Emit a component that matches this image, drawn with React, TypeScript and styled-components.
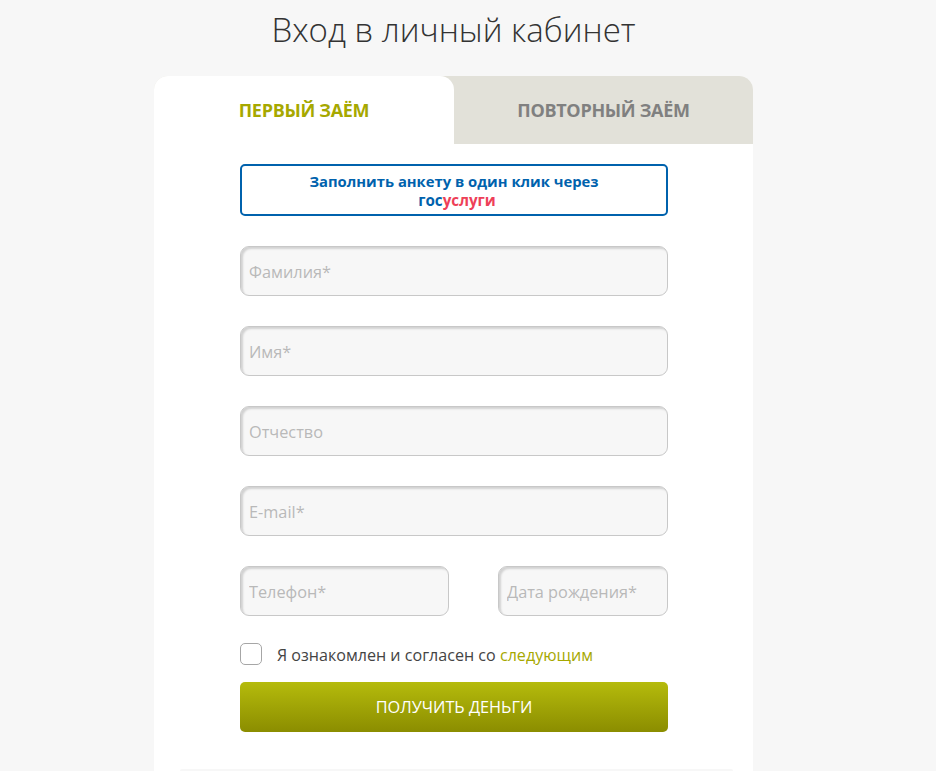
import React from "react";
import styled, { createGlobalStyle } from "styled-components";

const GlobalStyle = createGlobalStyle`
  html, body {
    margin: 0;
    height: 771px;
    overflow: hidden;
    background: #f7f7f7;
    font-family: "Open Sans", "Liberation Sans", sans-serif;
  }
  * {
    box-sizing: border-box;
  }
`;

const App = () => {
  return (
    <Page>
      <GlobalStyle />
      <Title>Вход в личный кабинет</Title>
      <Card>
        <Tabs>
          <Tab $active>ПЕРВЫЙ ЗАЁМ</Tab>
          <Tab>ПОВТОРНЫЙ ЗАЁМ</Tab>
        </Tabs>
        <Form>
          <GosButton type="button">
            Заполнить анкету в один клик через
            <GosLogo>
              гос<GosRed>услуги</GosRed>
            </GosLogo>
          </GosButton>
          <Field placeholder="Фамилия*" />
          <Field placeholder="Имя*" />
          <Field placeholder="Отчество" />
          <Field placeholder="E-mail*" />
          <Row>
            <Field $width={209} placeholder="Телефон*" />
            <Field $width={170} placeholder="Дата рождения*" />
          </Row>
          <Agree>
            <CheckBox />
            <AgreeText>
              Я ознакомлен и согласен со <AgreeLink>следующим</AgreeLink>
            </AgreeText>
          </Agree>
          <Submit type="button">ПОЛУЧИТЬ ДЕНЬГИ</Submit>
        </Form>
        <Divider />
      </Card>
    </Page>
  );
};

export default App;

const Page = styled.div`
  width: 936px;
  padding-left: 154px;
`;

const Title = styled.h1`
  width: 599px;
  height: 76px;
  margin: 0;
  padding-top: 6px;
  font-size: 33px;
  line-height: 48px;
  font-weight: 300;
  color: #333;
  text-align: center;
`;

const Card = styled.div`
  width: 599px;
  background: #fff;
  border-radius: 14px 14px 0 0;
`;

const Tabs = styled.div`
  display: flex;
  height: 68px;
  background: #e2e1d9;
  border-radius: 14px 14px 0 0;
`;

const Tab = styled.div<{ $active?: boolean }>`
  display: flex;
  align-items: center;
  justify-content: center;
  width: ${(p) => (p.$active ? "300px" : "299px")};
  font-size: 18px;
  font-weight: 700;
  letter-spacing: -0.3px;
  color: ${(p) => (p.$active ? "#a6a800" : "#808080")};
  background: ${(p) => (p.$active ? "#fff" : "transparent")};
  border-radius: 14px 14px 0 0;
`;

const Form = styled.div`
  display: flex;
  flex-direction: column;
  width: 428px;
  margin-left: 86px;
  padding-top: 20px;
`;

const GosButton = styled.button`
  display: block;
  width: 428px;
  height: 52px;
  margin-bottom: 30px;
  padding: 1px 0 0;
  font-family: inherit;
  font-size: 14.8px;
  line-height: 18px;
  font-weight: 700;
  color: #0062ad;
  background: #fff;
  border: 2px solid #0062ad;
  border-radius: 5px;
`;

const GosLogo = styled.div`
  margin-top: 1px;
  padding-left: 6px;
  font-size: 15.2px;
  color: #0062ad;
`;

const GosRed = styled.span`
  color: #ee3f58;
`;

const Field = styled.input<{ $width?: number }>`
  display: block;
  width: ${(p) => (p.$width ? `${p.$width}px` : "428px")};
  height: 50px;
  margin-bottom: 30px;
  padding: 2px 8px 0;
  font-family: inherit;
  font-size: 16.3px;
  background: #f7f7f7;
  border: 1px solid #c8c8c8;
  border-radius: 9px;
  box-shadow: inset 2px 2px 2px #d2d2d2;
  outline: none;

  &::placeholder {
    color: #b9b9b9;
    opacity: 1;
  }
`;

const Row = styled.div`
  display: flex;
  justify-content: space-between;
  width: 428px;
`;

const Agree = styled.div`
  display: flex;
  align-items: center;
  gap: 15px;
  height: 22px;
  margin-top: -3px;
  font-size: 16.1px;
  color: #444;
`;

const AgreeText = styled.span`
  padding-top: 2px;
`;

const CheckBox = styled.div`
  width: 22px;
  height: 22px;
  background: #fff;
  border: 1px solid #a6a6a6;
  border-radius: 5px;
`;

const AgreeLink = styled.span`
  color: #a6a800;
`;

const Submit = styled.button`
  width: 428px;
  height: 50px;
  margin-top: 17px;
  padding: 0;
  font-family: inherit;
  font-size: 16.3px;
  color: #fff;
  background: linear-gradient(to bottom, #b5bb0c, #8b8d00);
  border: none;
  border-radius: 5px;
`;

const Divider = styled.div`
  width: 553px;
  height: 2px;
  margin: 37px 0 0 26px;
  background: #f7f7f7;
  border-radius: 3px 3px 0 0;
`;
